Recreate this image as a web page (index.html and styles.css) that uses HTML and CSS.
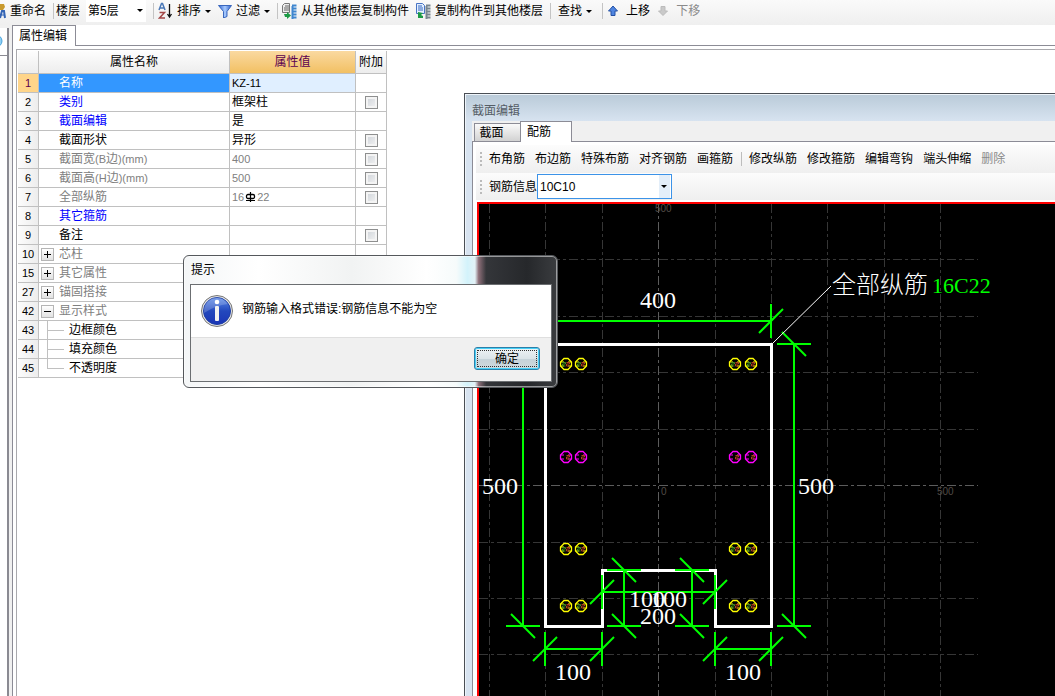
FILE: index.html
```html
<!DOCTYPE html>
<html lang="zh-CN">
<head>
<meta charset="utf-8">
<title>属性编辑</title>
<link rel="stylesheet" href="styles.css">
</head>
<body>
<div class="app">
  <header class="toolbar">
    <button class="tool" type="button">
      <svg width="6" height="18" viewBox="0 0 6 18"><path d="M0 2h4l1 3-2 3H0z" fill="#c99a2e"/><path d="M0 16 2 9h2l1 7" fill="none" stroke="#3465b5" stroke-width="2"/><path d="M0 13h4" stroke="#3465b5"/></svg>
      重命名</button>
    <span class="sep sep-tight"></span>
    <label class="floor"><span>楼层</span>
      <span class="combo"><select><option>第5层</option></select></span>
    </label>
    <span class="sep"></span>
    <button class="tool" type="button">
      <svg width="15" height="18" viewBox="0 0 15 18"><path d="M1 8 3.500 1.500h1L7 8M2 6h4" fill="none" stroke="#4a78b8" stroke-width="1.500"/><path d="M1.500 10.500h5L1.500 16H7" fill="none" stroke="#a34848" stroke-width="1.500"/><path d="M11.500 2v13M9.500 12l2 3 2-3" fill="none" stroke="#111" stroke-width="1.300"/></svg>
      排序<i class="caret"></i></button>
    <button class="tool tool-next" type="button">
      <svg width="14" height="14" viewBox="0 0 14 14"><defs><linearGradient id="fun"><stop offset="0" stop-color="#2f62d0"/><stop offset=".5" stop-color="#a9ccff"/><stop offset="1" stop-color="#2456c4"/></linearGradient></defs><path d="M.5 1.500h13L9 7.500v5L5.500 14V7.500z" fill="url(#fun)" stroke="#3a67bd"/></svg>
      过滤<i class="caret"></i></button>
    <span class="sep"></span>
    <button class="tool" type="button">
      <svg width="15" height="18" viewBox="0 0 15 18"><path d="M2.500 1.500h5v9h-7v-7z" fill="#ececec" stroke="#777"/><path d="M3 4h4M2 6h5M2 8h5" stroke="#666"/><path d="M2 12h3v-2l4 3.500L5 17v-2H3z" fill="#1c9a45"/><path d="M10.500 4v13M10 3.500h4.500M10.500 6.500h4M10.500 9.500h4M10.500 12.500h4M10.500 15.500h4" stroke="#3f86cf" stroke-width="2"/></svg>
      从其他楼层复制构件</button>
    <button class="tool tool-next" type="button">
      <svg width="15" height="18" viewBox="0 0 15 18"><path d="M.5 1.500h6l2 2v8h-8z" fill="#e2efff" stroke="#4773c4"/><path d="M2 4h4M2 6h5M2 8h5" stroke="#3767c0"/><path d="M2 10v6h5v-2l-2-1 2-2z" fill="#1c9a45"/><path d="M10.500 4v13M10 3.500h4.500M10.500 6.500h4M10.500 9.500h4M10.500 12.500h4M10.500 15.500h4" stroke="#78858f" stroke-width="2"/></svg>
      复制构件到其他楼层</button>
    <span class="sep"></span>
    <button class="tool tool-find" type="button">查找<i class="caret"></i></button>
    <span class="sep"></span>
    <button class="tool tool-move" type="button">
      <svg width="12" height="12" viewBox="0 0 12 12"><path d="M6 1 10.500 6H8v4.500H4V6H1.500z" fill="#4f85e0" stroke="#2450a4"/></svg>
      上移</button>
    <button class="tool tool-move tool-next" type="button" disabled>
      <svg width="12" height="12" viewBox="0 0 12 12"><path d="M6 10.500 10.500 6H8V1.500H4V6H1.500z" fill="#c9c9c9" stroke="#bbb"/></svg>
      下移</button>
  </header>

  <div class="workspace">
    <aside class="rail"><div class="rail-page"><svg width="3" height="14" viewBox="0 0 3 14"><circle cx="-4" cy="7" r="6" fill="#8fd0f5" stroke="#4aa3dc"/></svg></div></aside>
    <main class="panel">
      <div class="tabs"><button class="tab" type="button">属性编辑</button></div>
      <div class="panel-body">
        <table class="props">
          <colgroup><col class="c-no"><col class="c-name"><col class="c-value"><col class="c-add"></colgroup>
          <thead><tr><th></th><th>属性名称</th><th class="hot">属性值</th><th>附加</th></tr></thead>
          <tbody>
            <tr class="selected"><th>1</th><td class="name">名称</td><td class="value">KZ-11</td><td></td></tr>
            <tr><th>2</th><td class="name link">类别</td><td>框架柱</td><td class="add"><input type="checkbox" aria-label="类别 附加"></td></tr>
            <tr><th>3</th><td class="name link">截面编辑</td><td>是</td><td></td></tr>
            <tr><th>4</th><td class="name">截面形状</td><td>异形</td><td class="add"><input type="checkbox" aria-label="截面形状 附加"></td></tr>
            <tr class="dim"><th>5</th><td class="name">截面宽<small>(B</small>边<small>)(mm)</small></td><td class="value">400</td><td class="add"><input type="checkbox" aria-label="截面宽 附加"></td></tr>
            <tr class="dim"><th>6</th><td class="name">截面高<small>(H</small>边<small>)(mm)</small></td><td class="value">500</td><td class="add"><input type="checkbox" aria-label="截面高 附加"></td></tr>
            <tr class="dim"><th>7</th><td class="name">全部纵筋</td><td class="value">16<svg class="rebar" width="13" height="10" viewBox="0 0 13 10"><path d="M6.500 0v10M2 8.500h9" stroke="#000" stroke-width="1.200"/><rect x="2.500" y="2.500" width="8" height="4" rx="1.500" fill="none" stroke="#000" stroke-width="1.300"/></svg>22</td><td class="add"><input type="checkbox" aria-label="全部纵筋 附加"></td></tr>
            <tr><th>8</th><td class="name link">其它箍筋</td><td></td><td></td></tr>
            <tr><th>9</th><td class="name">备注</td><td></td><td class="add"><input type="checkbox" aria-label="备注 附加"></td></tr>
            <tr class="dim"><th>10</th><td class="group"><div class="node"><button class="expander plus" type="button" aria-label="展开"></button>芯柱</div></td><td></td><td></td></tr>
            <tr class="dim"><th>15</th><td class="group"><div class="node"><button class="expander plus" type="button" aria-label="展开"></button>其它属性</div></td><td></td><td></td></tr>
            <tr class="dim"><th>27</th><td class="group"><div class="node"><button class="expander plus" type="button" aria-label="展开"></button>锚固搭接</div></td><td></td><td></td></tr>
            <tr class="dim"><th>42</th><td class="group"><div class="node"><button class="expander" type="button" aria-label="折叠"></button>显示样式</div></td><td></td><td></td></tr>
            <tr><th>43</th><td class="group"><div class="node child"><i class="branch"></i>边框颜色</div></td><td></td><td></td></tr>
            <tr><th>44</th><td class="group"><div class="node child"><i class="branch"></i>填充颜色</div></td><td></td><td></td></tr>
            <tr><th>45</th><td class="group"><div class="node child"><i class="branch last"></i>不透明度</div></td><td></td><td></td></tr>
          </tbody>
        </table>
      </div>
    </main>
  </div>

  <section class="window">
    <h2 class="window-title">截面编辑</h2>
    <div class="window-client">
      <div class="wtabs"><button class="wtab" type="button">截面</button><button class="wtab current" type="button">配筋</button></div>
      <div class="wbody">
        <div class="strip">
          <i class="grip"></i>
          <button type="button">布角筋</button><button type="button">布边筋</button><button type="button">特殊布筋</button><button type="button">对齐钢筋</button><button type="button">画箍筋</button>
          <i class="strip-sep"></i>
          <button type="button">修改纵筋</button><button type="button">修改箍筋</button><button type="button">编辑弯钩</button><button type="button">端头伸缩</button><button type="button" disabled>删除</button>
        </div>
        <div class="strip strip-info">
          <i class="grip"></i>
          <label class="info"><span>钢筋信息</span><span class="combo combo-focus"><select><option>10C10</option></select></span></label>
        </div>
        <div class="canvas">
          <svg class="drawing" width="100%" height="100%">
            <defs>
              <g id="bar" fill="none"><path d="M-2-5.500H2L5.500-2V2L2 5.500H-2L-5.500 2V-2Z" stroke="currentColor" stroke-width="1.300"/><path d="M-5-2h3m4 0h3M-5 2h3m4 0h3" stroke="currentColor"/></g>
              <path id="down" d="M-12-12 12 12"/>
              <path id="up" d="M-12 12 12-12"/>
              <path id="left22" d="M-3.500-1.500h3v1.500h-3v2h3" fill="none" stroke="#3f8f20"/>
              <path id="right22" d="M.5-1.500h3V0h-3v2h3" fill="none" stroke="#b4401c"/>
            </defs>
            <g transform="translate(-479,-204)">
              <g class="grid">
                <path d="M489.500 204V700M545.500 204V700M602.500 204V700M715.500 204V700M771.500 204V700M827.500 204V700M884.500 204V700M940.500 204V700"/>
                <path d="M479 259.500H978M479 316.500H978M479 372.500H978M479 429.500H978M479 542.500H978M479 598.500H978M479 654.500H978"/>
                <path class="axis" d="M658.500 204V700M479 485.500H978"/>
              </g>
              <g class="scale"><text x="655" y="212">500</text><text x="661" y="495">0</text><text x="937" y="495">500</text></g>
              <path class="outline" d="M545.500 344.500H771.500V626.500H715.500V570.500H602.500V626.500H545.500Z"/>
              <g class="dims">
                <path d="M545 321H771M771 304V338M794 344V626M777 344H811M777 626H811M523 344V626M506 344H540M506 626H540"/>
                <path d="M624 570V626M607 570H641M607 626H641M692 570V626M675 570H709M675 626H709"/>
                <path d="M602 592H715M602 575V609M715 575V609"/>
                <path d="M545 649H602M545 632V666M602 632V666M715 649H771M715 632V666M771 632V666"/>
                <use href="#up" x="771" y="321"/><use href="#down" x="794" y="344"/><use href="#down" x="794" y="626"/><use href="#down" x="523" y="626"/>
                <use href="#down" x="624" y="570"/><use href="#down" x="624" y="626"/><use href="#down" x="692" y="570"/><use href="#down" x="692" y="626"/>
                <use href="#up" x="602" y="592"/><use href="#up" x="715" y="592"/>
                <use href="#up" x="545" y="649"/><use href="#up" x="602" y="649"/><use href="#up" x="715" y="649"/><use href="#up" x="771" y="649"/>
              </g>
              <g class="yellow">
                <use href="#bar" x="566" y="364"/><use href="#bar" x="581" y="364"/><use href="#bar" x="735" y="364"/><use href="#bar" x="751" y="364"/>
                <use href="#bar" x="566" y="549"/><use href="#bar" x="581" y="549"/><use href="#bar" x="735" y="549"/><use href="#bar" x="751" y="549"/>
                <use href="#bar" x="566" y="606"/><use href="#bar" x="581" y="606"/><use href="#bar" x="735" y="606"/><use href="#bar" x="751" y="606"/>
              </g>
              <g class="magenta"><use href="#bar" x="566" y="457"/><use href="#bar" x="581" y="457"/><use href="#bar" x="735" y="457"/><use href="#bar" x="751" y="457"/></g>
              <g>
                <use href="#left22" x="566" y="364"/><use href="#right22" x="566" y="364"/><use href="#left22" x="581" y="364"/><use href="#right22" x="581" y="364"/><use href="#left22" x="735" y="364"/><use href="#right22" x="735" y="364"/><use href="#left22" x="751" y="364"/><use href="#right22" x="751" y="364"/>
                <use href="#left22" x="566" y="549"/><use href="#right22" x="566" y="549"/><use href="#left22" x="581" y="549"/><use href="#right22" x="581" y="549"/><use href="#left22" x="735" y="549"/><use href="#right22" x="735" y="549"/><use href="#left22" x="751" y="549"/><use href="#right22" x="751" y="549"/>
                <use href="#left22" x="566" y="606"/><use href="#right22" x="566" y="606"/><use href="#left22" x="581" y="606"/><use href="#right22" x="581" y="606"/><use href="#left22" x="735" y="606"/><use href="#right22" x="735" y="606"/><use href="#left22" x="751" y="606"/><use href="#right22" x="751" y="606"/>
                <use href="#right22" x="566" y="457"/><use href="#right22" x="581" y="457"/><use href="#right22" x="735" y="457"/><use href="#right22" x="751" y="457"/>
              </g>
              <path class="leader" d="M773 343 831 286"/>
              <g class="figures">
                <text x="640" y="308">400</text><text x="482" y="494">500</text><text x="798" y="494">500</text>
                <text x="629" y="607">100</text><text x="651" y="607">100</text><text x="640" y="624">200</text>
                <text x="555" y="680">100</text><text x="725" y="680">100</text>
                <text class="note" x="832" y="293">全部纵筋</text><text class="code" x="932" y="293">16C22</text>
              </g>
            </g>
          </svg>
        </div>
      </div>
    </div>
  </section>

  <section class="dialog" role="dialog" aria-labelledby="dlg-title">
    <h2 class="dialog-title" id="dlg-title">提示</h2>
    <div class="dialog-body">
      <div class="message">
        <svg width="34" height="34" viewBox="0 0 34 34"><defs><linearGradient id="orb" x2="0" y2="1"><stop offset="0" stop-color="#5c8be8"/><stop offset=".5" stop-color="#2348bd"/><stop offset="1" stop-color="#1a35b5"/></linearGradient></defs><circle cx="17" cy="17" r="15.500" fill="#e4e4e4" stroke="#777"/><circle cx="17" cy="17" r="13.500" fill="url(#orb)" stroke="#1d3fa6"/><path d="M4 19A13 13 0 0 1 28 10Q16 11 4 19z" fill="#fff" opacity=".2"/><circle cx="17" cy="8" r="2.300" fill="#fff"/><rect x="15" y="12" width="4" height="15" rx="1" fill="#f2f2f2"/></svg>
        <p>钢筋输入格式错误:钢筋信息不能为空</p>
      </div>
      <div class="actions"><button class="ok" type="button">确定</button></div>
    </div>
  </section>
</div>
</body>
</html>
```
FILE: styles.css
```css
* { box-sizing: border-box; }
body {
  margin: 0;
  background: #fff;
  color: #000;
  font: 12px/18px "Liberation Sans", "Noto Sans CJK SC", sans-serif;
}
button, select, input { font: inherit; color: inherit; margin: 0; }
button { padding: 0; border: 0; background: none; white-space: nowrap; }
svg { display: block; flex: none; }
h2, p { margin: 0; font-size: 12px; font-weight: normal; }
small { font-size: 11px; }

.app { position: relative; display: flex; flex-direction: column; height: 100vh; overflow: hidden; }

/* top toolbar */
.toolbar {
  display: flex; align-items: center; flex: none; height: 25px; padding-bottom: 3px;
  background: linear-gradient(#fafafa, #efefef); white-space: nowrap;
}
.tool { display: flex; align-items: center; gap: 4px; }
.tool:disabled { color: #8a8a8a; }
.tool-next { margin-left: 7px; }
.tool-find { padding: 0 3px; }
.tool-move { gap: 7px; }
.sep { flex: none; width: 1px; height: 16px; margin: 0 4px 0 7px; background: #c4c4c4; }
.sep-tight { margin-right: 2px; }
.caret { border: 3px solid transparent; border-top-color: #000; border-bottom: 0; }
.floor { display: flex; align-items: center; gap: 6px; }
.combo { position: relative; display: flex; }
.combo select { appearance: none; width: 60px; height: 22px; padding: 0 2px; border: 0; border-radius: 0; background: #fff; outline: 0; }
.combo::after {
  content: ""; position: absolute; right: 3px; top: 9px;
  border: 3px solid transparent; border-top-color: #000; border-bottom: 0; pointer-events: none;
}

/* property panel */
.workspace { display: flex; flex: 1; min-height: 0; }
.rail { flex: none; width: 12px; padding-top: 3px; background: #f0f0f0; }
.rail-page { width: 9px; height: 100%; padding-top: 6px; border-right: 2px solid #8a8a92; background: linear-gradient(#fff 27px, #8a8a92 27px, #8a8a92 28px, #fff 28px); }
.panel { display: flex; flex-direction: column; flex: 1; border-left: 1px solid #8c8c96; }
.tabs { display: flex; height: 21px; border-bottom: 1px solid #8c8c96; }
.tab { height: 21px; padding: 0 8px 0 6px; border: 1px solid #8c8c96; border-width: 1px 1px 0 0; background: #fff; }
.panel-body { flex: 1; margin: 3px 0 0 3px; padding: 1px; border: 1px solid #a9a9ad; border-width: 1px 0 0 1px; }
.props { width: 369px; table-layout: fixed; border-collapse: separate; border-spacing: 0; }
.c-no { width: 21px; } .c-name { width: 191px; } .c-value { width: 126px; } .c-add { width: 31px; }
.props th, .props td { height: 19px; padding: 0; border: 1px solid #c0c0c0; border-width: 0 1px 1px 0; font-weight: normal; line-height: 18px; text-align: left; white-space: nowrap; }
.props th { background: linear-gradient(90deg, #fcfcfc, #ededed); text-align: center; }
.props tbody th { font-size: 11px; }
.props thead th { height: 23px; background: linear-gradient(#fdfdfd, #ededed); }
.props thead .hot { background: linear-gradient(#fad9a0, #f2c063); color: #5a0050; }
.props td { padding-left: 2px; }
.props .value { font-size: 11px; }
.props .name { padding-left: 20px; }
.props .group { padding-left: 0; }
.props .link { color: #00f; }
.dim td { color: #808080; }
.props .selected th { background: #ffd58a; color: #5a0050; }
.selected .name { background: #3397ff; color: #fff; }
.selected .value { background: #e0efff; }
.props .add { padding: 0; }
.add input {
  appearance: none; display: block; width: 13px; height: 13px; margin: 0 auto;
  border: 1px solid #8e8f8f; background: linear-gradient(135deg, #cdd2d8, #f4f4f4); box-shadow: inset 0 0 0 2px #f4f4f4;
}
.rebar { display: inline-block; vertical-align: -1px; }
.node { display: flex; align-items: center; height: 18px; }
.expander { width: 13px; height: 13px; margin: 0 5px 0 2px; border: 1px solid #b5b5b5; background: linear-gradient(#000, #000) center / 7px 1px no-repeat, linear-gradient(#fff, #e2e2e2); }
.expander.plus { background: linear-gradient(#000, #000) center / 7px 1px no-repeat, linear-gradient(#000, #000) center / 1px 7px no-repeat, linear-gradient(#fff, #e2e2e2); }
.branch { width: 17px; height: 18px; margin: 0 5px 0 8px; border-left: 1px solid #c0c0c0; background: linear-gradient(#c0c0c0, #c0c0c0) center / 100% 1px no-repeat; }
.branch.last { height: 10px; align-self: flex-start; border-bottom: 1px solid #c0c0c0; background: none; }

/* section editor window */
.window {
  position: absolute; left: 464px; top: 93px; right: 0; bottom: 0;
  display: flex; flex-direction: column; padding-left: 6px;
  border: 1px solid #4a4f55; border-width: 1px 0 0 1px;
  background: linear-gradient(#b9cad8, #d7e3f0 27px); box-shadow: inset 1px 1px #eef4fa;
}
.window-title { height: 27px; padding: 8px 0 0 1px; color: #555d66; }
.window-client { display: flex; flex-direction: column; flex: 1; min-height: 0; margin-left: 1px; background: #f0f0f0; }
.wtabs { display: flex; align-items: flex-end; height: 21px; padding-left: 2px; border-bottom: 1px solid #8c8c96; }
.wtab { width: 46px; height: 18px; padding-right: 12px; border: 1px solid #8c8c96; border-width: 1px 0 0 1px; background: linear-gradient(#fafafa, #d2d2d2); }
.wtab.current { width: 52px; height: 21px; margin-bottom: -1px; padding-right: 14px; border-width: 1px 1px 0; background: #fff; }
.wbody { display: flex; flex-direction: column; flex: 1; min-height: 0; padding: 3px 0 0 3px; border-left: 1px solid #8c8c96; background: #fff; }
.strip { display: flex; align-items: center; flex: none; gap: 10px; height: 28px; padding-left: 4px; background: linear-gradient(#fcfcfc, #efefef); white-space: nowrap; overflow: hidden; }
.strip button:disabled { color: #8a8a8a; }
.strip-sep { width: 1px; height: 14px; margin: 0 -3px 0 -2px; background: #bdbdbd; }
.grip { width: 2px; height: 14px; margin-right: -3px; background: repeating-linear-gradient(#bbb 0 2px, transparent 2px 4px); }
.strip-info { height: 27px; }
.info { display: flex; align-items: center; }
.combo-focus select { width: 135px; height: 25px; border: 1px solid #3c93e8; background: linear-gradient(90deg, #fff 121px, #e3eef9 121px) 0 0 / 132px 100% no-repeat #fff; }
.combo-focus::after { right: 5px; top: 11px; }
.canvas { flex: 1; min-height: 0; margin: 2px 0 0 1px; border: 2px solid #f00; border-width: 2px 0 0 2px; background: #000; overflow: hidden; }
.grid { fill: none; stroke: #363636; stroke-width: 1; stroke-dasharray: 9 3 3 3; }
.axis { stroke: #5c5c5c; }
.scale { fill: #514b46; font-size: 10px; }
.outline { fill: none; stroke: #fff; stroke-width: 3; }
.dims { fill: none; stroke: #0f0; stroke-width: 2; }
.leader { fill: none; stroke: #fff; stroke-width: 1; }
.yellow { color: #ff0; }
.magenta { color: #f0f; }
.figures { fill: #fff; font-family: "Liberation Serif", "Noto Sans CJK SC", serif; font-size: 24px; }
.note { font-weight: 300; }
.code { fill: #0f0; font-size: 22px; }

/* message dialog */
.dialog {
  position: absolute; left: 183px; top: 255px; width: 375px;
  display: flex; flex-direction: column; padding: 0 5px 5px 6px;
  border: 1px solid #55585c; border-radius: 6px;
  background: linear-gradient(90deg, #f4f6f7, #fff 20%, #f1f3f3 45%, #fff 65%, #f6fbfb 73%, #d3f3fb 76%, #e3f2f7 78%, #8d6f79 79%, #34363a 81%, #26282b 92%, #3a3c3f);
  box-shadow: inset 0 0 0 1px rgba(255, 255, 255, .5);
}
.dialog-title { height: 28px; padding: 5px 0 0 1px; }
.dialog-body { border: 1px solid #6b6e71; background: #fff; }
.message { display: flex; gap: 8px; height: 52px; padding: 9px 0 0 9px; }
.message p { padding-top: 6px; }
.actions { display: flex; justify-content: flex-end; height: 44px; padding: 9px 11px 0 0; border-top: 1px solid #dfdfdf; background: #f0f0f0; }
.ok { width: 66px; height: 23px; border: 1px solid #2c7ea8; border-radius: 3px; background: linear-gradient(#eef3f5, #dbe4e8 50%, #c5d2d8 51%, #cfdadf); box-shadow: inset 0 0 0 1px #46d0f7; outline: 1px dotted #333; outline-offset: -4px; }
```
